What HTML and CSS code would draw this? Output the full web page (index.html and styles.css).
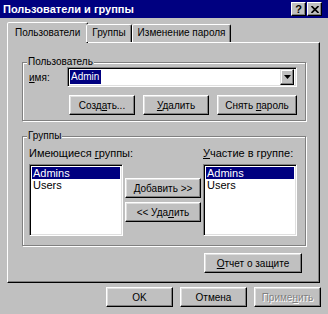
FILE: index.html
```html
<!DOCTYPE html>
<html lang="ru">
<head>
    <meta charset="UTF-8">
    <title>Пользователи и группы</title>
    <link rel="stylesheet" href="styles.css">
</head>
<body>
    <div class="window">
        <div class="titlebar">
            <span class="title">Пользователи и группы</span>
            <div class="caption-buttons">
                <div class="cbtn">?</div>
                <div class="cbtn">
                    <svg width="8" height="7" viewBox="0 0 8 7"><path d="M0.5 0l7 7M7.5 0l-7 7" stroke="#000" stroke-width="1.6"/></svg>
                </div>
            </div>
        </div>
        <div class="content">
            <div class="tabs">
                <div class="tab active">Пользователи</div>
                <div class="tab">Группы</div>
                <div class="tab">Изменение пароля</div>
            </div>
            <div class="panel">
                <fieldset class="group user-group">
                    <legend>Пользователь</legend>
                    <div class="name-row">
                        <label><u>и</u>мя:</label>
                        <div class="combo sunken">
                            <span class="combo-value">Admin</span>
                            <span class="combo-arrow">
                                <svg width="7" height="4" viewBox="0 0 7 4"><path d="M0 0h7L3.5 4z" fill="#000"/></svg>
                            </span>
                        </div>
                    </div>
                    <div class="user-buttons">
                        <button class="btn w66">Созд<u>а</u>ть...</button>
                        <button class="btn w66"><u>У</u>далить</button>
                        <button class="btn w80">Снять <u>п</u>ароль</button>
                    </div>
                </fieldset>
                <fieldset class="group groups-group">
                    <legend>Группы</legend>
                    <div class="groups-grid">
                        <div class="list-col">
                            <div class="list-label">Имеющиеся <u>г</u>руппы:</div>
                            <div class="listbox sunken">
                                <div class="item selected">Admins</div>
                                <div class="item">Users</div>
                            </div>
                        </div>
                        <div class="move-buttons">
                            <button class="btn"><u>Д</u>обавить &gt;&gt;</button>
                            <button class="btn">&lt;&lt; Уда<u>л</u>ить</button>
                        </div>
                        <div class="list-col">
                            <div class="list-label"><u>У</u>частие в группе:</div>
                            <div class="listbox sunken">
                                <div class="item selected">Admins</div>
                                <div class="item">Users</div>
                            </div>
                        </div>
                    </div>
                </fieldset>
                <div class="report-row">
                    <button class="btn report"><u>О</u>тчет о защите</button>
                </div>
            </div>
            <div class="footer">
                <button class="btn w67">OK</button>
                <button class="btn w67">Отмена</button>
                <button class="btn w67 disabled">Приме<u>н</u>ить</button>
            </div>
        </div>
    </div>
</body>
</html>
```

FILE: styles.css
```css
* {
    box-sizing: border-box;
}

body {
    margin: 0;
    background-color: #c0c0c0;
    font-family: "Liberation Sans", Arial, sans-serif;
    font-size: 10px;
    color: #000;
}

.window {
    width: 328px;
    height: 314px;
    background-color: #c0c0c0;
    overflow: hidden;
}

.titlebar {
    height: 18px;
    background-color: #000080;
    color: #fff;
    display: flex;
    align-items: center;
    justify-content: space-between;
    padding: 0 6px 0 3px;
}

.title {
    font-weight: bold;
    font-size: 11px;
}

.caption-buttons {
    display: flex;
    gap: 1px;
}

.cbtn {
    width: 15px;
    height: 14px;
    background-color: #c0c0c0;
    border: 1px solid;
    border-color: #fff #000 #000 #fff;
    box-shadow: inset -1px -1px #808080;
    display: flex;
    align-items: center;
    justify-content: center;
    color: #000;
    font-weight: bold;
    font-size: 11px;
    line-height: 12px;
}

.content {
    padding: 4px 8px 0 7px;
}

/* tabs */
.tabs {
    display: flex;
    align-items: flex-end;
    height: 20px;
    padding-left: 2px;
    position: relative;
    z-index: 1;
}

.tab {
    height: 18px;
    padding: 0 5px;
    line-height: 16px;
    white-space: nowrap;
    background-color: #c0c0c0;
    border: 1px solid;
    border-bottom: none;
    border-color: #fff #000 transparent #fff;
    border-radius: 2px 2px 0 0;
    box-shadow: inset -1px 0 #808080;
}

.tab.active {
    height: 21px;
    margin: 0 -2px -1px -2px;
    padding: 2px 7px 0 7px;
}

.panel {
    height: 241px;
    border: 1px solid;
    border-color: #fff #000 #000 #fff;
    box-shadow: inset -1px -1px #808080;
    padding: 13px 13px 0 14px;
}

/* group boxes */
.group {
    margin: 0;
    padding: 0 8px 0 6px;
    border: 1px solid #808080;
    box-shadow: inset 1px 1px #fff, 1px 1px #fff;
    min-width: 0;
}

.group legend {
    padding: 0 1px;
    margin-left: -2px;
    line-height: 12px;
    background-color: #c0c0c0;
}

.user-group {
    padding-bottom: 5px;
}

.groups-group {
    margin-top: 9px;
    padding-bottom: 9px;
}

.name-row {
    display: flex;
    align-items: center;
    margin-top: -1px;
}

.name-row label {
    width: 38px;
}

.sunken {
    background-color: #fff;
    border: 1px solid;
    border-color: #808080 #fff #fff #808080;
    box-shadow: inset 1px 1px #000, inset -1px -1px #dfdfdf;
}

.combo {
    flex: 1;
    height: 20px;
    display: flex;
    align-items: center;
    justify-content: space-between;
    padding: 1px 2px 2px 1px;
}

.combo-value {
    background-color: #000080;
    color: #fff;
    line-height: 14px;
    padding: 0 2px 0 1px;
    margin-left: 1px;
}

.combo-arrow {
    width: 14px;
    height: 16px;
    background-color: #c0c0c0;
    border: 1px solid;
    border-color: #dfdfdf #000 #000 #dfdfdf;
    box-shadow: inset -1px -1px #808080, inset 1px 1px #fff;
    display: flex;
    align-items: center;
    justify-content: center;
}

.user-buttons {
    display: flex;
    justify-content: flex-end;
    gap: 8px;
    margin-top: 8px;
}

/* buttons */
.btn {
    height: 20px;
    padding: 0 2px;
    white-space: nowrap;
    font-family: inherit;
    font-size: 10px;
    color: #000;
    background-color: #c0c0c0;
    border: 1px solid;
    border-color: #fff #000 #000 #fff;
    box-shadow: inset -1px -1px #808080, inset 1px 1px #dfdfdf;
}

.w66 {
    width: 66px;
}

.w67 {
    width: 67px;
}

.w80 {
    width: 80px;
}

.btn.disabled {
    color: #808080;
    text-shadow: 1px 1px #fff;
}

/* group lists */
.groups-grid {
    display: grid;
    grid-template-columns: 94px 80px 94px;
}

.list-label {
    margin-top: 5px;
    line-height: 13px;
    font-size: 11px;
    white-space: nowrap;
}

.listbox {
    margin-top: 4px;
    height: 72px;
    padding: 2px;
}

.item {
    line-height: 12px;
    padding-left: 1px;
    font-size: 11px;
}

.item.selected {
    background-color: #000080;
    color: #fff;
}

.move-buttons {
    display: flex;
    flex-direction: column;
    gap: 4px;
    padding: 36px 2px 0 2px;
}

.report-row {
    display: flex;
    justify-content: flex-end;
    margin-top: 7px;
    padding-right: 4px;
}

.report {
    width: 98px;
}

.footer {
    display: flex;
    justify-content: flex-end;
    gap: 7px;
    margin-top: 4px;
    margin-right: -1px;
}
```
